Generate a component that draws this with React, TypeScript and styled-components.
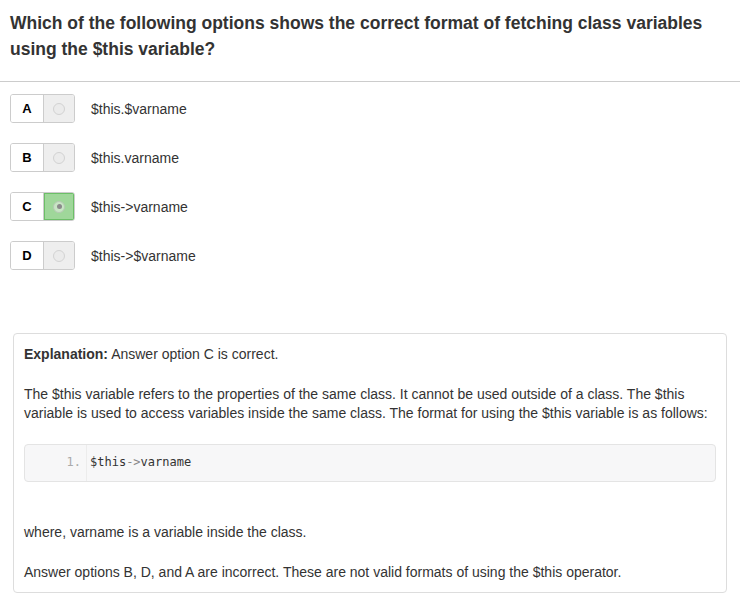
import React from "react";
import styled, { createGlobalStyle } from "styled-components";

const Global = createGlobalStyle`
  html, body { margin: 0; padding: 0; background: #fff; }
  body { font-family: "Liberation Sans", Arial, sans-serif; color: #333; }
`;

const Page = styled.div`
  width: 745px;
  display: flex;
  flex-direction: column;
`;

const Question = styled.h1`
  margin: 0;
  padding: 10px 30px 0 10px;
  font-size: 17.5px;
  line-height: 26px;
  font-weight: bold;
  color: #333;
`;

const Rule = styled.hr`
  margin: 19px 5px 0 0;
  border: 0;
  border-top: 1px solid #ccc;
`;

const Options = styled.div`
  display: flex;
  flex-direction: column;
  gap: 20px;
  padding: 12px 0 0 10px;
`;

const OptionRow = styled.div`
  display: flex;
  align-items: center;
  gap: 16px;
`;

const Choice = styled.div`
  display: flex;
  height: 29px;
  border: 1px solid #ccc;
  border-radius: 3px;
  overflow: hidden;
  box-sizing: border-box;
`;

const Letter = styled.div`
  width: 32px;
  display: flex;
  align-items: center;
  justify-content: center;
  font-size: 13px;
  font-weight: bold;
  color: #000;
  background: #fff;
  border-right: 1px solid #ccc;
`;

const RadioCell = styled.div<{ $on?: boolean }>`
  width: 30px;
  display: flex;
  align-items: center;
  justify-content: center;
  background: ${(p) => (p.$on ? "#9fd79a" : "#eeeeee")};
  ${(p) => (p.$on ? "box-shadow: inset 0 0 0 1px #6cbf67;" : "")}
`;

const Radio = styled.span<{ $on?: boolean }>`
  width: 12px;
  height: 12px;
  border-radius: 50%;
  box-sizing: border-box;
  border: 1px solid ${(p) => (p.$on ? "#b5c9b3" : "#d2d2d2")};
  background: ${(p) => (p.$on ? "#c8e5c5" : "#ebebeb")};
  display: flex;
  align-items: center;
  justify-content: center;
  &::after {
    content: "";
    width: 5px;
    height: 5px;
    border-radius: 50%;
    background: ${(p) => (p.$on ? "#8a8a8a" : "transparent")};
  }
`;

const OptionText = styled.span`
  font-size: 14px;
  color: #333;
`;

const Panel = styled.div`
  margin: 63px 0 3px 13px;
  width: 714px;
  box-sizing: border-box;
  border: 1px solid #ddd;
  border-radius: 4px;
  padding: 11px 10px 10px 10px;
  font-size: 14px;
  line-height: 19px;
  color: #333;
`;

const Para = styled.p`
  margin: 0 0 20.5px 0;
  &:last-child { margin-bottom: 0; }
`;

const CodeBlock = styled.div`
  display: flex;
  margin: 21px 0 41.5px 0;
  height: 38px;
  box-sizing: border-box;
  background: #f7f7f8;
  border: 1px solid #e4e4e4;
  border-radius: 4px;
  font-family: "DejaVu Sans Mono", "Liberation Mono", monospace;
  font-size: 12px;
  align-items: stretch;
`;

const Gutter = styled.div`
  width: 62px;
  box-sizing: border-box;
  padding-right: 5px;
  color: #aaa;
  display: flex;
  align-items: center;
  justify-content: flex-end;
  border-right: 1px solid #ececec;
`;

const CodeLine = styled.div`
  padding-left: 3px;
  display: flex;
  align-items: center;
  color: #333;
`;

const Arrow = styled.span`
  color: #888;
`;

const options = [
  { l: "A", t: "$this.$varname" },
  { l: "B", t: "$this.varname" },
  { l: "C", t: "$this->varname", on: true },
  { l: "D", t: "$this->$varname" },
];

export default function App() {
  return (
    <Page>
      <Global />
      <Question>
        Which of the following options shows the correct format of fetching class variables using the $this variable?
      </Question>
      <Rule />
      <Options>
        {options.map((o) => (
          <OptionRow key={o.l}>
            <Choice>
              <Letter>{o.l}</Letter>
              <RadioCell $on={o.on}>
                <Radio $on={o.on} />
              </RadioCell>
            </Choice>
            <OptionText>{o.t}</OptionText>
          </OptionRow>
        ))}
      </Options>
      <Panel>
        <Para>
          <b>Explanation:</b> Answer option C is correct.
        </Para>
        <Para>
          The $this variable refers to the properties of the same class. It cannot be used outside of a class. The $this variable is used to access variables inside the same class. The format for using the $this variable is as follows:
        </Para>
        <CodeBlock>
          <Gutter>1.</Gutter>
          <CodeLine>
            $this<Arrow>-&gt;</Arrow>varname
          </CodeLine>
        </CodeBlock>
        <Para>where, varname is a variable inside the class.</Para>
        <Para>
          Answer options B, D, and A are incorrect. These are not valid formats of using the $this operator.
        </Para>
      </Panel>
    </Page>
  );
}
